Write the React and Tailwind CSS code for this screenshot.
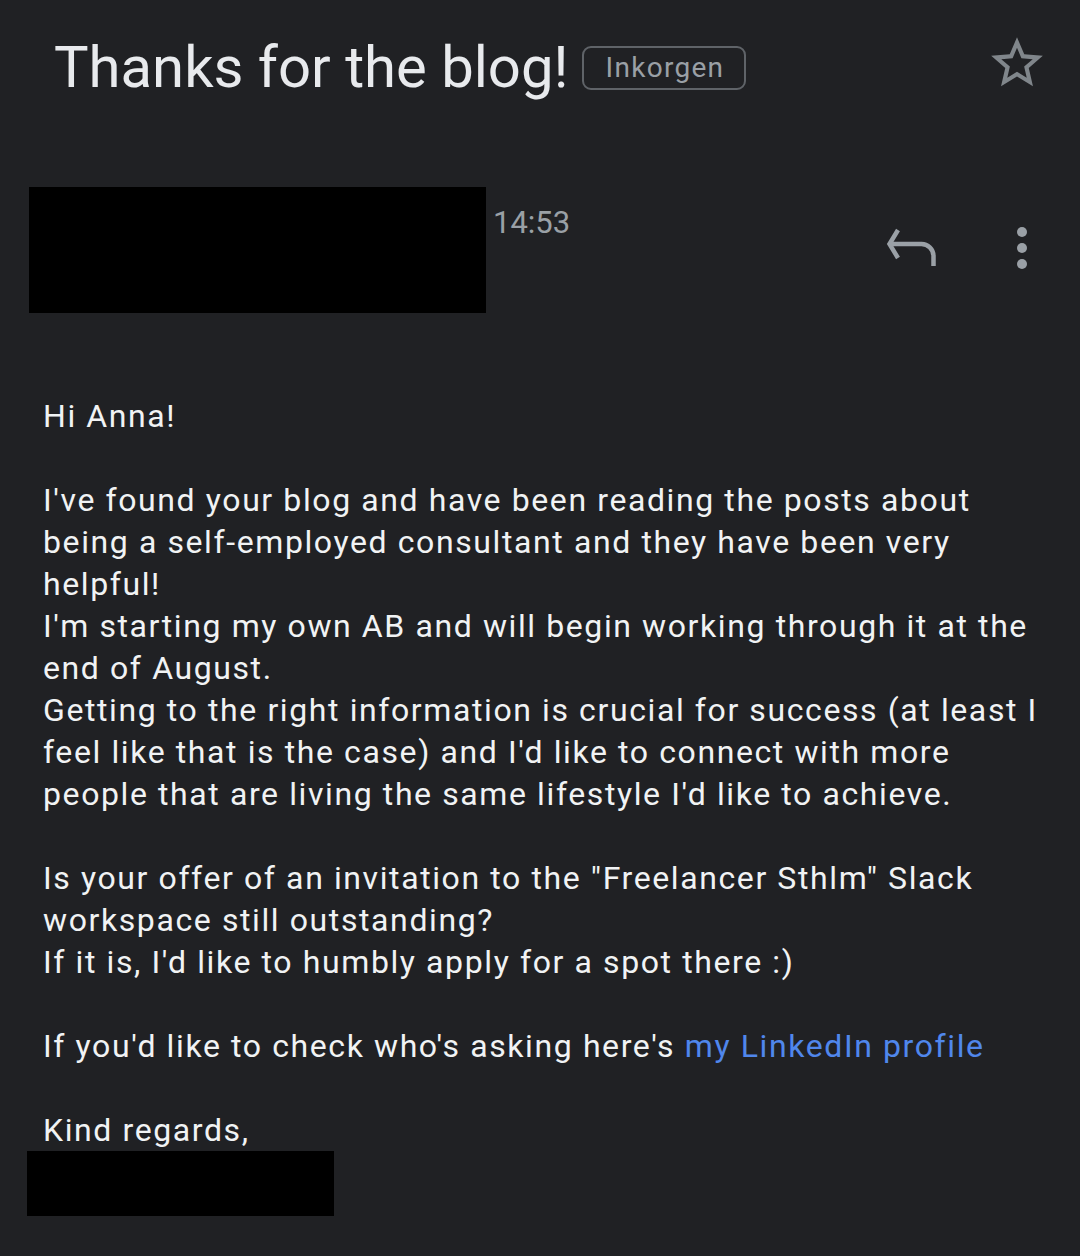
import React from "react";

const StarIcon = () => (
    <svg width="62" height="62" viewBox="0 0 24 24" fill="#80868b">
        <path d="M22 9.24l-7.19-.62L12 2 9.19 8.63 2 9.24l5.46 4.73L5.82 21 12 17.27 18.18 21l-1.63-7.03L22 9.24zM12 15.4l-3.76 2.27 1-4.28-3.32-2.88 4.38-.38L12 6.1l1.71 4.04 4.38.38-3.32 2.88 1 4.28L12 15.4z" />
    </svg>
);

const ReplyIcon = () => (
    <svg width="54" height="44" viewBox="0 0 54 44" fill="none" stroke="#9aa0a6" strokeWidth="4.5">
        <path d="M12 4 L3.5 18 L12 32" strokeLinejoin="miter" />
        <path d="M4 18 H35 A12 12 0 0 1 47.5 30 V40" />
    </svg>
);

const MoreIcon = () => (
    <svg width="20" height="44" viewBox="0 0 20 44" fill="#9aa0a6">
        <circle cx="10" cy="6" r="5" />
        <circle cx="10" cy="22" r="5" />
        <circle cx="10" cy="38" r="5" />
    </svg>
);

const Gap = () => <div className="h-[42px]" />;

const App = () => {
    return (
        <div className="w-[1080px] h-[1256px] bg-[#202124] overflow-hidden font-['Roboto',sans-serif]">
            {/* Subject */}
            <div className="flex items-center h-[134px] pl-[54px] pr-[32px]">
                <h1 className="text-[58px] leading-[70px] text-[#e8eaed]">Thanks for the blog!</h1>
                <span className="ml-[14px] mt-[2px] h-[44px] pl-[21px] pr-[20px] flex items-center border-2 border-[#5f6368] rounded-[9px] text-[28px] tracking-[1.3px] text-[#9aa0a6]">
                    Inkorgen
                </span>
                <div className="ml-auto -mt-[8px]">
                    <StarIcon />
                </div>
            </div>

            {/* Sender */}
            <div className="flex mt-[53px] pl-[29px] pr-[48px]">
                <div className="w-[457px] h-[126px] bg-black" />
                <div className="ml-[7px] mt-[20px] text-[31px] leading-[31px] text-[#9aa0a6]">14:53</div>
                <div className="ml-auto mt-[39px] flex items-start gap-[72px]">
                    <ReplyIcon />
                    <MoreIcon />
                </div>
            </div>

            {/* Body */}
            <div className="mt-[82px] pl-[43px] text-[32px] leading-[42px] tracking-[1.6px] text-[#f1f3f4]">
                <div>Hi Anna!</div>
                <Gap />
                <div>
                    I've found your blog and have been reading the posts about<br />
                    being a self-employed consultant and they have been very<br />
                    helpful!<br />
                    I'm starting my own AB and will begin working through it at the<br />
                    end of August.<br />
                    Getting to the right information is crucial for success (at least I<br />
                    feel like that is the case) and I'd like to connect with more<br />
                    people that are living the same lifestyle I'd like to achieve.
                </div>
                <Gap />
                <div>
                    Is your offer of an invitation to the "Freelancer Sthlm" Slack<br />
                    workspace still outstanding?<br />
                    If it is, I'd like to humbly apply for a spot there :)
                </div>
                <Gap />
                <div>
                    If you'd like to check who's asking here's{" "}
                    <a href="#" className="text-[#5087ec]">my LinkedIn profile</a>
                </div>
                <Gap />
                <div>Kind regards,</div>
                <div className="-ml-[16px] w-[307px] h-[65px] bg-black" />
            </div>
        </div>
    );
};

export default App;
